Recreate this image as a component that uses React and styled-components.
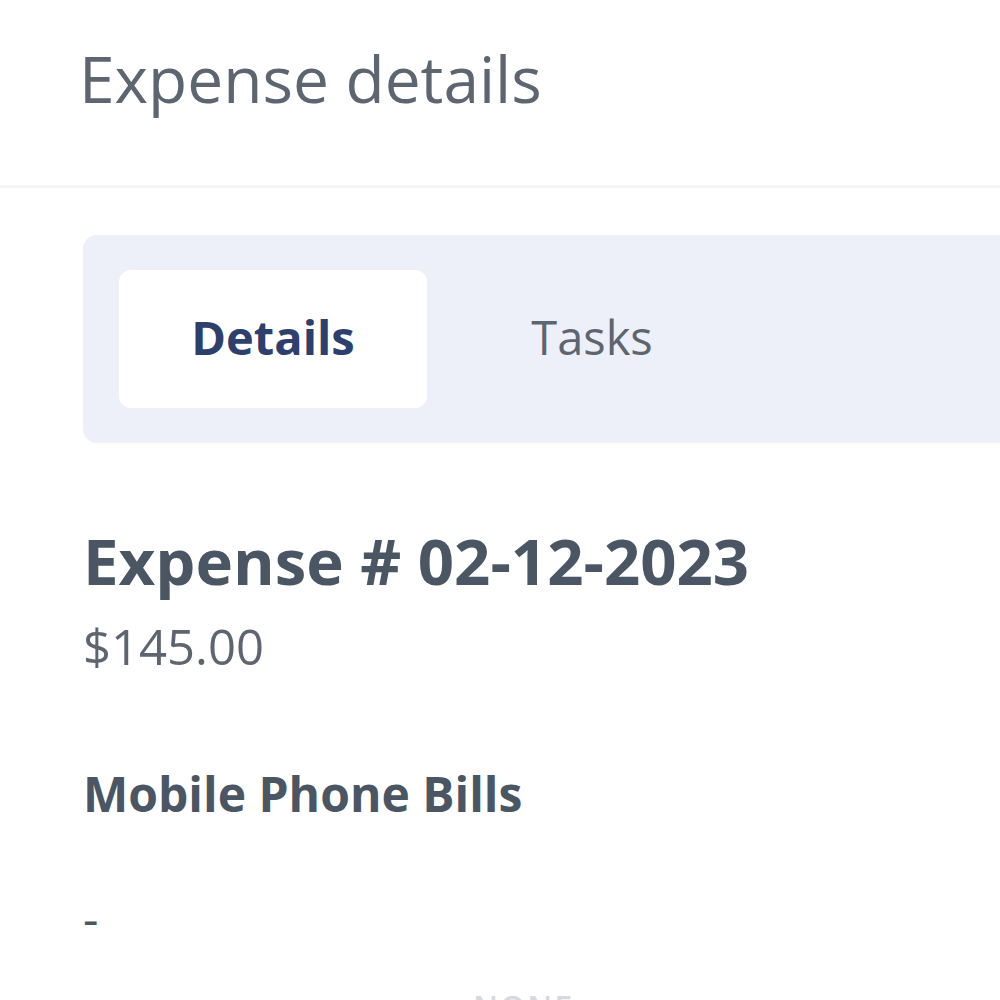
import React from "react";
import styled, { createGlobalStyle } from "styled-components";

const GlobalStyle = createGlobalStyle`
  html, body {
    margin: 0;
    padding: 0;
    background: #ffffff;
    overflow: hidden;
  }
  body {
    font-family: "Open Sans", "Noto Sans", sans-serif;
  }
`;

const Page = styled.div`
  width: 1200px;
  min-height: 1000px;
  background: #ffffff;
`;

const Header = styled.header`
  padding: 37px 83px 64px 79px;
  border-bottom: 3px solid #f6f6f8;
`;

const Title = styled.h1`
  margin: 0;
  font-size: 64px;
  font-weight: 400;
  line-height: 84px;
  color: #5d6670;
`;

const Content = styled.main`
  padding: 47px 0 0 83px;
`;

const TabList = styled.div`
  display: flex;
  gap: 11px;
  padding: 35px 36px;
  background: #eef0f9;
  border-radius: 14px;
`;

const Tab = styled.button`
  width: 308px;
  height: 138px;
  border: none;
  border-radius: 12px;
  background: ${(p) => (p.$active ? "#ffffff" : "transparent")};
  font-family: inherit;
  font-size: 47px;
  font-weight: ${(p) => (p.$active ? 700 : 400)};
  color: ${(p) => (p.$active ? "#2d3f6d" : "#5d6670")};
  cursor: pointer;
  padding: 0 0 4px;
`;

const Section = styled.section`
  padding-top: 75px;
`;

const Heading = styled.h2`
  margin: 0;
  font-size: 63.5px;
  font-weight: 700;
  line-height: 86px;
  color: #4a5663;
`;

const Amount = styled.div`
  margin-top: 10px;
  font-size: 49px;
  font-weight: 400;
  line-height: 65px;
  color: #5d6670;
`;

const Category = styled.div`
  margin-top: 82px;
  font-size: 48px;
  font-weight: 700;
  line-height: 65px;
  color: #4a5663;
`;

const Description = styled.div`
  margin-top: 59px;
  font-size: 48px;
  font-weight: 400;
  line-height: 65px;
  color: #4a5663;
`;

const Faded = styled.div`
  margin-top: 32px;
  padding-left: 390px;
  font-size: 32px;
  font-weight: 600;
  line-height: 50px;
  color: #d6d9df;
  letter-spacing: 2px;
`;

export default function App() {
  return (
    <>
      <GlobalStyle />
      <Page>
        <Header>
          <Title>Expense details</Title>
        </Header>
        <Content>
          <TabList>
            <Tab $active>Details</Tab>
            <Tab>Tasks</Tab>
          </TabList>
          <Section>
            <Heading>Expense # 02-12-2023</Heading>
            <Amount>$145.00</Amount>
            <Category>Mobile Phone Bills</Category>
            <Description>-</Description>
            <Faded>NONE</Faded>
          </Section>
        </Content>
      </Page>
    </>
  );
}
